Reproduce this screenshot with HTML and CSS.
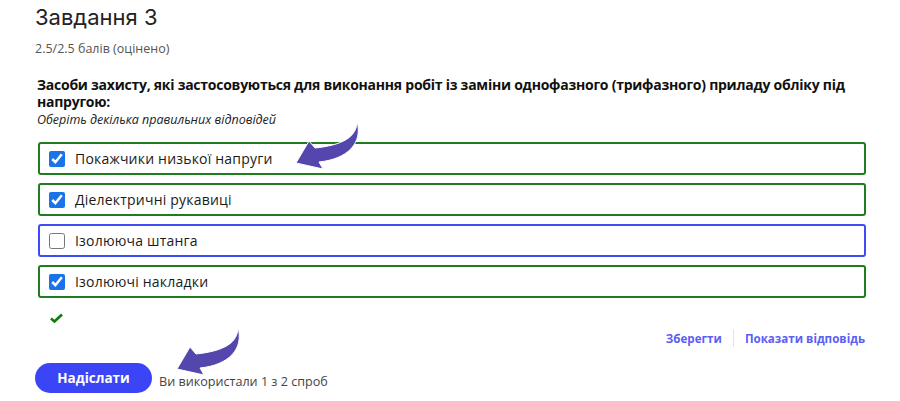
FILE: index.html
```html
<!DOCTYPE html>
<html lang="uk">
  <head>
    <meta charset="UTF-8" />
    <title>Завдання 3</title>
    <link rel="stylesheet" href="styles.css">
  </head>
  <body>
    <div class="task">
      <h2 class="task-title">Завдання 3</h2>
      <p class="score">2.5/2.5 балів (оцінено)</p>

      <div class="question">
        <p class="prompt">Засоби захисту, які застосовуються для виконання робіт із заміни однофазного (трифазного) приладу обліку під напругою:</p>
        <p class="hint">Оберіть декілька правильних відповідей</p>
      </div>

      <div class="options">
        <label class="option correct">
          <input type="checkbox" checked />
          <span>Покажчики низької напруги</span>
        </label>
        <label class="option correct">
          <input type="checkbox" checked />
          <span>Діелектричні рукавиці</span>
        </label>
        <label class="option">
          <input type="checkbox" />
          <span>Ізолююча штанга</span>
        </label>
        <label class="option correct">
          <input type="checkbox" checked />
          <span>Ізолюючі накладки</span>
        </label>
      </div>

      <div class="status">
        <svg width="13" height="10" viewBox="0 0 13 10"><path d="M1 5.5 L4.5 8.5 L12 1.5" fill="none" stroke="#0e7a0e" stroke-width="2.6"/></svg>
      </div>

      <div class="actions">
        <a href="#">Зберегти</a>
        <span class="sep"></span>
        <a href="#">Показати відповідь</a>
      </div>

      <div class="submit-row">
        <button>Надіслати</button>
        <span class="attempts">Ви використали 1 з 2 спроб</span>
      </div>

      <!-- annotation arrows -->
      <svg class="arrow arrow-top" width="80" height="60" viewBox="0 0 80 60">
        <path d="M67 3 C67 19 53 27 25 30 L19 23 L6 45 L33 51 L29 44 C58 41 73 25 67 3 Z" fill="#5347ad" stroke="#fff" stroke-width="1"/>
      </svg>
      <svg class="arrow arrow-bottom" width="80" height="60" viewBox="0 0 80 60">
        <path d="M67 3 C67 19 53 27 25 30 L19 23 L6 45 L33 51 L29 44 C58 41 73 25 67 3 Z" fill="#5347ad" stroke="#fff" stroke-width="1"/>
      </svg>
    </div>
  </body>
</html>
```

FILE: styles.css
```css
body {
  margin: 0;
  background: #fff;
  font-family: "Open Sans", "Liberation Sans", sans-serif;
  color: #1d1d1d;
}
.task {
  position: relative;
  padding: 0 34px 0 35px;
}
.task-title {
  margin: 0;
  padding-top: 2px;
  font-family: Inter, "Open Sans", sans-serif;
  font-size: 22px;
  font-weight: 400;
  line-height: 30px;
  color: #222;
}
.score {
  margin: 9px 0 0;
  font-size: 12.5px;
  line-height: 16px;
  color: #555;
}
.question {
  margin-top: 19px;
  padding-left: 2px;
}
.prompt {
  margin: 0;
  font-size: 14px;
  font-weight: 700;
  line-height: 17px;
  letter-spacing: -0.25px;
  color: #111;
}
.hint {
  margin: 1px 0 0;
  font-size: 12.5px;
  font-style: italic;
  line-height: 17px;
  color: #222;
}
.options {
  display: flex;
  flex-direction: column;
  gap: 8px;
  margin: 14px 0 0 3px;
}
.option {
  display: flex;
  align-items: center;
  height: 33px;
  box-sizing: border-box;
  padding-left: 9px;
  border: 2px solid #3d4cf5;
  border-radius: 3px;
  font-size: 14px;
  color: #1a1a1a;
  letter-spacing: 0.2px;
}
.option.correct {
  border-color: #1f7d1f;
}
.option input {
  width: 16px;
  height: 16px;
  margin: 0 10px 0 0;
  accent-color: #1a73e8;
}
.status {
  height: 30px;
  padding: 8px 0 0 15px;
  box-sizing: border-box;
}
.actions {
  display: flex;
  justify-content: flex-end;
  align-items: center;
  gap: 11px;
  height: 20px;
  padding-right: 1px;
}
.actions a {
  font-size: 11.6px;
  font-weight: 700;
  color: #5a60f2;
  text-decoration: none;
}
.sep {
  width: 1px;
  height: 18px;
  background: #e2e2e2;
}
.submit-row {
  display: flex;
  align-items: center;
  gap: 7px;
  margin-top: 15px;
}
button {
  width: 117px;
  height: 30px;
  border: none;
  border-radius: 15px;
  background: #3b45f5;
  color: #fff;
  font-family: "Open Sans", sans-serif;
  font-size: 13.5px;
  font-weight: 700;
}
.attempts {
  margin-top: 6px;
  font-size: 12.6px;
  color: #444;
}
.arrow {
  position: absolute;
}
.arrow-top {
  left: 290px;
  top: 118px;
}
.arrow-bottom {
  left: 171px;
  top: 324px;
}
```
